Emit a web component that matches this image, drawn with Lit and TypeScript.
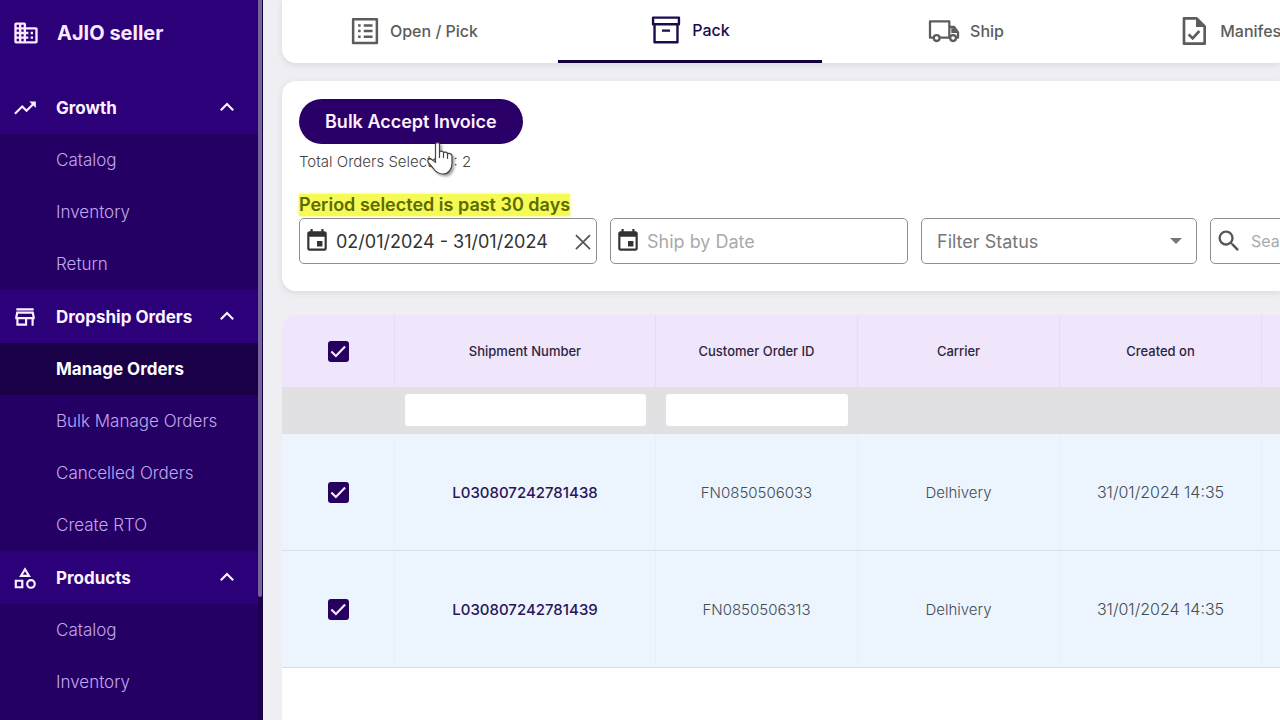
import { LitElement, html, svg, css, nothing } from "lit";
import { customElement, property } from "lit/decorators.js";
import { classMap } from "lit/directives/class-map.js";

const icons: Record<string, unknown> = {
  building: svg`<path fill="currentColor" d="M12 7V4.500c0-.8-.7-1.500-1.500-1.500h-7C2.700 3 2 3.700 2 4.500v15c0 .8.7 1.500 1.500 1.500h17c.8 0 1.500-.7 1.500-1.500v-11c0-.8-.7-1.500-1.500-1.500H12zM6 19H4v-2h2v2zm0-4H4v-2h2v2zm0-4H4V9h2v2zm0-4H4V5h2v2zm4 12H8v-2h2v2zm0-4H8v-2h2v2zm0-4H8V9h2v2zm0-4H8V5h2v2zm10 12h-8v-2h2v-2h-2v-2h2v-2h-2V9h8v10zm-2-8h-2v2h2v-2zm0 4h-2v2h2v-2z"/>`,
  growth: svg`<path fill="currentColor" d="m16 6 2.290 2.290-4.880 4.880-4-4L2 16.590 3.410 18l6-6 4 4 6.300-6.290L22 12V6z"/>`,
  store: svg`<path fill="currentColor" d="M18.360 9l.6 3H5.040l.6-3h12.720M20 4H4v2h16V4zm0 3H4l-1 5v2h1v6h10v-6h4v6h2v-6h1v-2l-1-5zM6 18v-4h6v4H6z"/>`,
  shapes: svg`<path fill="currentColor" d="M12 2 6.500 11h11L12 2zm0 3.840L13.930 9h-3.870L12 5.840zM17.500 13a4.500 4.500 0 1 0 0 9 4.500 4.500 0 0 0 0-9zm0 7a2.500 2.500 0 1 1 0-5 2.500 2.500 0 0 1 0 5zM2.500 21.500h8v-8h-8v8zm2-6h4v4h-4v-4z"/>`,
  up: svg`<path fill="none" stroke="currentColor" stroke-width="2" d="m6.300 14 5.700-5.700 5.700 5.700"/>`,
  list: svg`<path fill="none" stroke="currentColor" stroke-width="2" stroke-linejoin="round" d="M2.500 2.500h19v19h-19z"/><path fill="currentColor" d="M11 6.500h7v2h-7zm0 4.500h7v2h-7zm0 4.500h7v2h-7zM6.500 6.500h2v2h-2zm0 4.500h2v2h-2zm0 4.500h2v2h-2z"/>`,
  box: svg`<path fill="none" stroke="currentColor" stroke-width="1.800" stroke-linejoin="round" d="M2.300 2.700h19.400v5H2.300zM3.400 7.700h17.200v13.500H3.400zM9 12.500h6"/>`,
  truck: svg`<path fill="none" stroke="currentColor" stroke-width="1.700" stroke-linejoin="round" d="M4.300 17H1.500V4.800H16V17H8.700M16 9h3.600l2.900 4v4h-1.200M16 17h.7"/><path fill="currentColor" d="M17.500 10h2.300l2.500 3.500h-4.800z"/><circle cx="6.500" cy="17.300" r="2.200" fill="none" stroke="currentColor" stroke-width="1.700"/><circle cx="18.800" cy="17.300" r="2.200" fill="none" stroke="currentColor" stroke-width="1.700"/>`,
  file: svg`<path fill="none" stroke="currentColor" stroke-width="2" stroke-linejoin="round" d="M4.500 2.500h9.500l6 6v13H4.500z"/><path fill="currentColor" d="M13.500 2.500V9H20z"/><path fill="none" stroke="currentColor" stroke-width="2" d="m8 14.500 3 3 5-5.500"/>`,
  event: svg`<path fill="currentColor" d="M17 12h-5v5h5v-5zM16 1v2H8V1H6v2H5c-1.110 0-1.990.9-1.990 2L3 19c0 1.100.89 2 2 2h14c1.100 0 2-.9 2-2V5c0-1.100-.9-2-2-2h-1V1h-2zm3 18H5V8h14v11z"/>`,
  close: svg`<path fill="none" stroke="#555" stroke-width="1.600" d="M5.500 6.500l13 13M18.500 6.500l-13 13"/>`,
  search: svg`<path fill="currentColor" d="M15.500 14h-.79l-.28-.27A6.470 6.470 0 0 0 16 9.500 6.500 6.500 0 1 0 9.500 16c1.610 0 3.090-.59 4.230-1.570l.27.280v.79l5 4.990L20.490 19l-4.990-5zm-6 0C7.010 14 5 11.990 5 9.500S7.010 5 9.500 5 14 7.010 14 9.500 11.990 14 9.500 14z"/>`,
  down: svg`<path fill="currentColor" d="m6 9 6 6 6-6z"/>`,
  check: svg`<path fill="none" stroke="currentColor" stroke-width="2.600" d="m4 12.500 5.500 5.500L20.500 6.500"/>`,
};

const icon = (name: string, size: string) =>
  html`<svg class="icon ${size}" viewBox="0 0 24 24" aria-hidden="true">${icons[name]}</svg>`;

const base = css`
  * { box-sizing: border-box; }
  .icon { display: block; flex: none; }
  .s20 { width: 20px; height: 20px; }
  .s24 { width: 24px; height: 24px; }
  .s26 { width: 26px; height: 26px; }
  .s28 { width: 28px; height: 28px; }
  .s30 { width: 30px; height: 30px; }
  .s32 { width: 32px; height: 32px; }
  button, input, select { font: inherit; color: inherit; margin: 0; padding: 0; border: 0; background: none; outline: 0; }
`;

interface Section { title: string; icon: string; links: string[]; }

const sections: Section[] = [
  { title: "Growth", icon: "growth", links: ["Catalog", "Inventory", "Return"] },
  { title: "Dropship Orders", icon: "store", links: ["Manage Orders", "Bulk Manage Orders", "Cancelled Orders", "Create RTO"] },
  { title: "Products", icon: "shapes", links: ["Catalog", "Inventory"] },
];

@customElement("seller-nav")
class SellerNav extends LitElement {
  @property() current = "";

  static styles = [base, css`
    :host { display: block; box-sizing: border-box; flex: 0 0 263px; height: 100%; overflow: hidden; background: #250064; border-right: 1px solid #150044; }
    .shell { display: flex; height: 100%; }
    .nav { flex: 1; min-width: 0; overflow: hidden; }
    .track { flex: 0 0 4px; background: #1c004d; }
    .thumb { height: 597px; background: #75649b; border-radius: 0 0 2px 2px; }
    .brand { display: flex; align-items: center; gap: 17px; height: 81px; padding: 0 12px 15px; background: #2c0078; color: #fbeaff; font-size: 20px; font-weight: 700; }
    .head { display: flex; align-items: center; gap: 18px; width: 100%; height: 53px; padding: 0 18px 0 12px; background: #2c0078; color: #fbf2ff; font-size: 17px; font-weight: 700; text-align: left; }
    .label { flex: 1; min-width: 0; white-space: nowrap; }
    .list { list-style: none; margin: 0; padding: 0; }
    .link { display: flex; align-items: center; height: 52px; padding-left: 56px; color: #c0a8ec; font-size: 17px; font-weight: 300; text-decoration: none; white-space: nowrap; }
    .link.on { background: #1a0046; color: #fff; font-weight: 700; }
  `];

  render() {
    return html`<div class="shell">
      <nav class="nav">
        <div class="brand">${icon("building", "s28")}<span>AJIO seller</span></div>
        ${sections.map((s) => html`
          <button class="head" type="button" aria-expanded="true">${icon(s.icon, "s26")}<span class="label">${s.title}</span>${icon("up", "s26")}</button>
          <ul class="list">${s.links.map((l) => html`<li><a class=${classMap({ link: true, on: l === this.current })} href="#">${l}</a></li>`)}</ul>`)}
      </nav>
      <div class="track"><div class="thumb"></div></div>
    </div>`;
  }
}

@customElement("order-tabs")
class OrderTabs extends LitElement {
  static styles = [base, css`
    :host { display: block; background: #fff; border-radius: 0 0 0 14px; box-shadow: 0 2px 6px #d9d9e2; }
    .tabs { display: flex; gap: 12px; height: 63px; }
    .tab { flex: 0 0 264px; display: flex; align-items: center; justify-content: center; gap: 10px; padding-bottom: 1px; color: #5c5c5c; font-size: 16px; font-weight: 500; }
    .tab.on { border-bottom: 3px solid #14003c; color: #1d0a4c; }
  `];

  render() {
    const tabs = [["list", "Open / Pick", "s30"], ["box", "Pack", "s32"], ["truck", "Ship", "s32"], ["file", "Manifested", "s32"]];
    return html`<div class="tabs" role="tablist">${tabs.map(([i, t, s]) => html`
      <button type="button" role="tab" class=${classMap({ tab: true, on: t === "Pack" })} aria-selected=${t === "Pack"}>${icon(i, s)}<span>${t}</span></button>`)}</div>`;
  }
}

@customElement("order-filters")
class OrderFilters extends LitElement {
  static styles = [base, css`
    :host { display: block; padding: 18px 0 27px 17px; background: #fff; border-radius: 14px 0 0 14px; box-shadow: 0 2px 6px #d9d9e2; }
    .accept { position: relative; display: block; height: 45px; padding: 0 26px; border-radius: 23px; background: #2a0068; color: #fff0ff; font-size: 18px; font-weight: 600; }
    .hand { position: absolute; left: 128px; top: 43px; width: 26px; height: 34px; filter: drop-shadow(2px 2px 1px #0005); }
    .total { margin: 8px 0 0; color: #444; font-size: 15px; font-weight: 300; line-height: 20px; }
    .period { display: table; margin: 22px 0 2px; background: #f6fa55; box-shadow: 0 0 3px #f6fa55; color: #5c6a00; font-size: 18px; font-weight: 600; line-height: 22px; }
    .fields { display: flex; gap: 13px; }
    .field { flex: 0 0 298px; min-width: 0; display: flex; align-items: center; gap: 6px; height: 46px; padding: 0 0 0 4px; border: 1px solid #8e8e96; border-radius: 5px; color: #333; font-size: 18px; }
    .field input { flex: 1; width: 0; min-width: 0; }
    .field input::placeholder { color: #aaa; opacity: 1; }
    .status { flex-basis: 276px; display: grid; padding: 0 8px 0 15px; color: #777; }
    .status select { grid-area: 1 / 1; width: 100%; appearance: none; }
    .status .icon { grid-area: 1 / 1; justify-self: end; pointer-events: none; }
    .search { gap: 8px; color: #555; font-size: 16px; }
  `];

  render() {
    return html`
      <button class="accept" type="button">Bulk Accept Invoice
        <svg class="hand" viewBox="0 0 26 34" aria-hidden="true"><path fill="#fff" stroke="#444" stroke-width="1.200" stroke-linejoin="round" d="M8.500 2.500c0-2.500 4-2.500 4 0V10c1-1.500 4-1 4 .8 1-1.300 4-.8 4 1.200 1-1.200 4.300-.5 4.500 2v7.500c0 6-3.500 10.500-9 10.500-5 0-8-3-10-6L1.200 20.500c-1.500-2.500 1-4.500 3.500-3l3.800 2.800z"/><path fill="none" stroke="#444" stroke-width="1.200" d="M12.500 10v6M16.500 11v5M20.500 12v5"/></svg>
      </button>
      <p class="total">Total Orders Selected : 2</p>
      <p class="period">Period selected is past 30 days</p>
      <div class="fields">
        <div class="field">${icon("event", "s26")}<input aria-label="Created date range" value="02/01/2024 - 31/01/2024"><button type="button" aria-label="Clear dates">${icon("close", "s26")}</button></div>
        <div class="field">${icon("event", "s26")}<input aria-label="Ship by date" placeholder="Ship by Date"></div>
        <div class="field status"><select aria-label="Filter status"><option>Filter Status</option></select>${icon("down", "s24")}</div>
        <div class="field search">${icon("search", "s28")}<input aria-label="Search" placeholder="Search"></div>
      </div>`;
  }
}

@customElement("order-table")
class OrderTable extends LitElement {
  static styles = [base, css`
    :host { display: block; overflow: hidden; background: #fff; border-radius: 14px 0 0 0; }
    table { width: 1182px; table-layout: fixed; border-collapse: separate; border-spacing: 0; text-align: center; }
    .pick { width: 113px; } .num { width: 261px; } .col { width: 202px; }
    th { height: 72px; padding: 0; background: #efe6fc; border-right: 1px solid #e6ddf4; color: #2c2440; font-size: 13px; font-weight: 500; }
    .search td { height: 47px; padding: 0 10px 2px; background: #e1e1e3; }
    .search input { display: block; width: 100%; height: 32px; border-radius: 3px; background: #fff; }
    .row td { height: 117px; padding: 0; background: #ecf4fd; border-right: 1px solid #e7f0f9; border-bottom: 1px solid #d5dfea; color: #444c55; font-size: 15px; font-weight: 300; }
    .row .when { font-size: 16px; }
    .row a { color: #2a1558; font-weight: 500; text-decoration: none; }
    .tick { display: inline-grid; place-items: center; vertical-align: middle; color: #f6e9ff; }
    .tick input { grid-area: 1 / 1; appearance: none; width: 21px; height: 21px; border-radius: 3px; background: #27005f; }
    .tick .icon { grid-area: 1 / 1; pointer-events: none; }
  `];

  tick(label: string) {
    return html`<label class="tick"><input type="checkbox" checked aria-label=${label}>${icon("check", "s20")}</label>`;
  }

  render() {
    const heads = ["Shipment Number", "Customer Order ID", "Carrier", "Created on", ""];
    const rows = [["L030807242781438", "FN0850506033"], ["L030807242781439", "FN0850506313"]];
    return html`<table>
      <colgroup><col class="pick"><col class="num"><col class="col"><col class="col"><col class="col"><col class="col"></colgroup>
      <thead><tr><th>${this.tick("Select all")}</th>${heads.map((h) => html`<th>${h || nothing}</th>`)}</tr></thead>
      <tbody>
        <tr class="search"><td></td><td><input aria-label="Shipment number"></td><td><input aria-label="Customer order ID"></td><td></td><td></td><td></td></tr>
        ${rows.map(([s, o]) => html`<tr class="row"><td>${this.tick(s)}</td><td><a href="#">${s}</a></td><td>${o}</td><td>Delhivery</td><td class="when">31/01/2024 14:35</td><td></td></tr>`)}
      </tbody>
    </table>`;
  }
}

@customElement("app-root")
class AppRoot extends LitElement {
  static styles = css`
    :host { display: flex; height: 100vh; overflow: hidden; background: #efeef3; font-family: Inter, "Liberation Sans", sans-serif; }
    .main { flex: 1; min-width: 0; overflow: hidden; display: flex; flex-direction: column; padding-left: 19px; }
    .filters { margin: 18px 0 24px; }
    .orders { flex: 1; min-height: 0; }
  `;

  render() {
    return html`<seller-nav current="Manage Orders"></seller-nav>
      <main class="main">
        <order-tabs></order-tabs>
        <order-filters class="filters"></order-filters>
        <order-table class="orders"></order-table>
      </main>`;
  }
}
